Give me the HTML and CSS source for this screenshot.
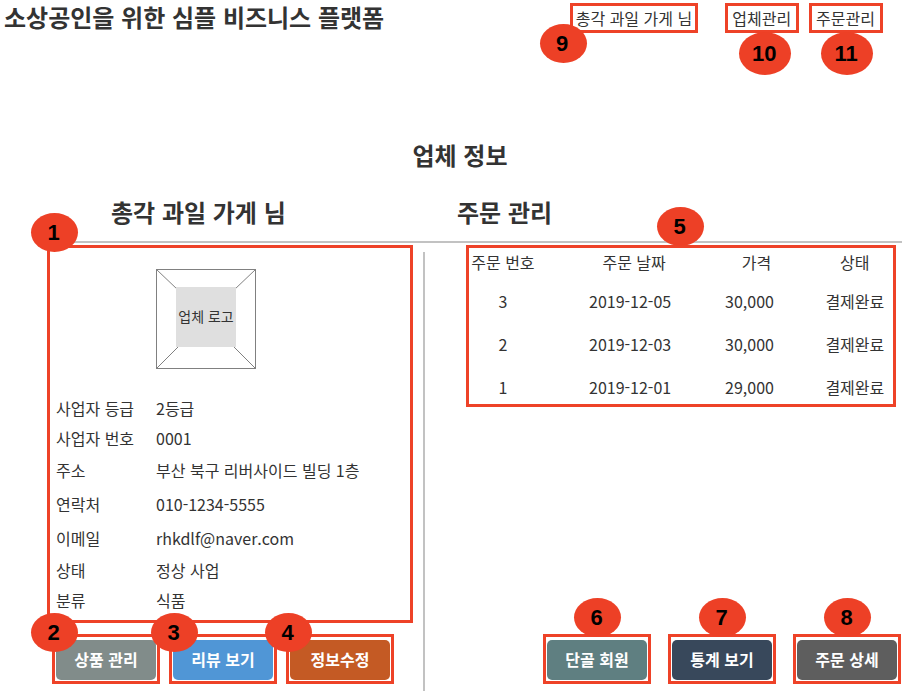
FILE: index.html
```html
<!DOCTYPE html>
<html lang="ko">
<head>
<meta charset="utf-8">
<meta name="viewport" content="width=device-width, initial-scale=1">
<title>업체 정보</title>
<link rel="stylesheet" href="styles.css">
</head>
<body>
<div class="page">
  <header class="topbar">
    <h1 class="brand">소상공인을 위한 심플 비즈니스 플랫폼</h1>
    <nav class="menu">
      <div class="frame menu-item menu-user"><a href="#">총각 과일 가게 님</a><span class="badge badge-9">9</span></div>
      <div class="frame menu-item"><a href="#">업체관리</a><span class="badge badge-wide badge-10">10</span></div>
      <div class="frame menu-item"><a href="#">주문관리</a><span class="badge badge-wide badge-11">11</span></div>
    </nav>
  </header>

  <h2 class="title">업체 정보</h2>

  <div class="headings">
    <h3>총각 과일 가게 님</h3>
    <h3>주문 관리</h3>
  </div>

  <main class="columns">
    <section class="store">
      <div class="frame profile">
        <span class="badge badge-1">1</span>
        <div class="logo">
          <svg class="logo-lines" viewBox="0 0 100 100" aria-hidden="true">
            <rect x="0.5" y="0.5" width="99" height="99"/>
            <path d="M0.5 0.5L22 21M99.5 0.5L78 21M0.5 99.5L24 76M99.5 99.5L76 76"/>
          </svg>
          <span class="logo-text">업체 로고</span>
        </div>
        <dl class="details">
          <div><dt>사업자 등급</dt><dd>2등급</dd></div>
          <div><dt>사업자 번호</dt><dd>0001</dd></div>
          <div class="contact"><dt>주소</dt><dd>부산 북구 리버사이드 빌딩 1층</dd></div>
          <div class="contact"><dt>연락처</dt><dd>010-1234-5555</dd></div>
          <div class="contact"><dt>이메일</dt><dd>rhkdlf@naver.com</dd></div>
          <div><dt>상태</dt><dd>정상 사업</dd></div>
          <div><dt>분류</dt><dd>식품</dd></div>
        </dl>
      </div>
      <div class="actions store-actions">
        <div class="frame action"><button type="button" class="btn btn-product">상품 관리</button><span class="badge badge-2">2</span></div>
        <div class="frame action"><button type="button" class="btn btn-review">리뷰 보기</button><span class="badge badge-3">3</span></div>
        <div class="frame action"><button type="button" class="btn btn-edit">정보수정</button><span class="badge badge-4">4</span></div>
      </div>
    </section>

    <div class="divider"></div>

    <section class="orders">
      <div class="frame order-list">
        <span class="badge badge-5">5</span>
        <table>
          <thead>
            <tr><th class="col-no">주문 번호</th><th class="col-date">주문 날짜</th><th class="col-price">가격</th><th class="col-state">상태</th></tr>
          </thead>
          <tbody>
            <tr><td>3</td><td>2019-12-05</td><td class="price">30,000</td><td>결제완료</td></tr>
            <tr><td>2</td><td>2019-12-03</td><td class="price">30,000</td><td>결제완료</td></tr>
            <tr><td>1</td><td>2019-12-01</td><td class="price">29,000</td><td>결제완료</td></tr>
          </tbody>
        </table>
      </div>
      <div class="actions order-actions">
        <div class="frame action"><button type="button" class="btn btn-member">단골 회원</button><span class="badge badge-top">6</span></div>
        <div class="frame action"><button type="button" class="btn btn-stats">통계 보기</button><span class="badge badge-top">7</span></div>
        <div class="frame action"><button type="button" class="btn btn-order">주문 상세</button><span class="badge badge-top">8</span></div>
      </div>
    </section>
  </main>
</div>
</body>
</html>
```
FILE: styles.css
```css
* {
  box-sizing: border-box;
}

body {
  margin: 0;
  background: #fff;
  color: #333;
  font: 16px/24px "Noto Sans CJK KR", "Noto Sans", sans-serif;
}

h1, h2, h3, dl, dd {
  margin: 0;
}

h1, h2, h3 {
  font-size: 24px;
  font-weight: 700;
}

.page {
  display: flex;
  flex-direction: column;
  min-height: 100vh;
}

/* Numbered call-outs */
.frame {
  position: relative;
  border: 3px solid #ee4228;
}

.badge {
  position: absolute;
  z-index: 1;
  display: flex;
  align-items: center;
  justify-content: center;
  width: 47px;
  height: 39px;
  padding-right: 2px;
  border-radius: 50%;
  background: #ed4026;
  color: #000;
  font: 700 22px/24px "Liberation Sans", sans-serif;
}

.badge-wide {
  width: 52px;
  height: 43px;
}

.badge-1 { left: -19px; top: -35px; }
.badge-2 { left: -24px; top: -24px; }
.badge-3 { left: -21px; top: -24px; }
.badge-4 { left: -24px; top: -24px; }
.badge-5 { left: 188px; top: -41px; }
.badge-top { left: 28px; top: -39px; }
.badge-9 { left: -33px; top: 18px; }
.badge-10 { left: 11px; top: 26px; }
.badge-11 { left: 9px; top: 26px; }

/* Header */
.topbar {
  display: flex;
  justify-content: space-between;
  padding: 3px 31px 0 4px;
}

.brand {
  line-height: 28px;
}

.menu {
  display: flex;
  gap: 10px;
}

.menu-item {
  padding: 0 5px 0 4px;
}

.menu-user {
  margin-right: 17px;
  padding: 0 3px;
}

.menu a {
  color: inherit;
  text-decoration: none;
  white-space: nowrap;
}

.title {
  margin-top: 104px;
  padding-left: 6px;
  line-height: 36px;
  text-align: center;
}

.headings {
  display: grid;
  grid-template-columns: 346fr 445fr;
  margin: 21px 12px 0 50px;
  padding: 0 0 11px 61px;
  border-bottom: 2px solid #c2c2c2;
  line-height: 36px;
}

/* Columns */
.columns {
  display: grid;
  flex: 1;
  grid-template-columns: 423fr 2px 489fr;
}

.divider {
  margin-top: 9px;
  background: #c2c2c2;
}

.store,
.orders {
  display: flex;
  flex-direction: column;
  padding-top: 2px;
  padding-bottom: 7px;
}

.store {
  padding-left: 47px;
  padding-right: 10px;
}

.orders {
  padding-left: 41px;
  padding-right: 13px;
}

/* Store profile */
.profile {
  padding: 21px 6px 5px;
}

.logo {
  position: relative;
  display: grid;
  place-items: center;
  width: 100px;
  height: 100px;
  margin: 0 0 24px 100px;
}

.logo-lines {
  position: absolute;
  inset: 0;
  fill: none;
  stroke: #808080;
}

.logo-text {
  position: relative;
  width: 60px;
  margin-top: -4px;
  padding-bottom: 2px;
  background: #dfdfdf;
  font-size: 14px;
  line-height: 58px;
  text-align: center;
  white-space: nowrap;
}

.details > div {
  display: grid;
  grid-template-columns: 100px 1fr;
  line-height: 30px;
}

.details > .contact {
  line-height: 34px;
}

/* Orders */
.order-list {
  margin-right: 5px;
}

table {
  width: 100%;
  table-layout: fixed;
  border-collapse: collapse;
  text-align: center;
}

th {
  padding: 2px 0 6px;
  font-weight: 400;
}

td {
  padding: 9px 0 10px;
}

tbody tr:last-child td {
  padding-bottom: 5px;
}

.col-no { width: 16%; }
.col-date { width: 44%; padding-left: 8px; }
.col-price { width: 22%; padding-right: 27px; }
.col-state { width: 18%; }

td.price {
  padding-right: 41px;
}

/* Buttons */
.actions {
  display: flex;
}

.store-actions {
  gap: 9px;
  margin-top: 11px;
  padding-left: 5px;
}

.order-actions {
  justify-content: flex-end;
  gap: 17px;
  margin-top: auto;
}

.action {
  padding: 3px 1px 1px;
}

.btn {
  display: block;
  width: 100px;
  height: 40px;
  padding: 0 0 2px;
  border: 0;
  border-radius: 5px;
  color: #fff;
  font: inherit;
  font-weight: 700;
}

.btn-product { background: #818c8a; }
.btn-review { background: #5096d6; }
.btn-edit { background: #c45a24; }
.btn-member { background: #5f7f81; }
.btn-stats { background: #38485b; }
.btn-order { background: #5e5e5e; }
```
